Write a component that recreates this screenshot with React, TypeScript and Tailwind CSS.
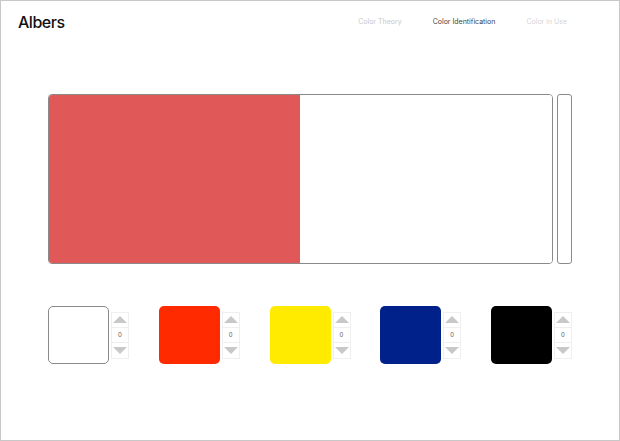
import React from 'react';

const swatches = [
  { id: 'white', color: 'bg-white border border-[#8a8a8a]' },
  { id: 'red', color: 'bg-[#ff2a00]' },
  { id: 'yellow', color: 'bg-[#ffeb00]' },
  { id: 'blue', color: 'bg-[#00218a]' },
  { id: 'black', color: 'bg-black' },
];

const Stepper = () => (
  <div className="flex flex-col w-[18px] h-[47px] border border-[#efefef] bg-white">
    <button className="flex-1 flex items-center justify-center border-b border-[#efefef]">
      <span className="w-0 h-0 border-l-[7px] border-r-[7px] border-b-[7px] border-l-transparent border-r-transparent border-b-[#c8c8c8]" />
    </button>
    <div className="flex-1 flex items-center justify-center text-[6px] leading-none text-[#555]">0</div>
    <button className="flex-1 flex items-center justify-center border-t border-[#efefef]">
      <span className="w-0 h-0 border-l-[7px] border-r-[7px] border-t-[7px] border-l-transparent border-r-transparent border-t-[#c8c8c8]" />
    </button>
  </div>
);

export default function App() {
  return (
    <div
      className="w-[620px] h-[441px] border border-[#c8c8c8] bg-white overflow-hidden"
      style={{ fontFamily: "Inter, 'Noto Sans', sans-serif" }}
    >
      <header className="h-[41px] flex items-center justify-between pl-[17px] pr-[52px]">
        <h1 className="text-[16px] font-medium tracking-[-0.03em] text-[#111] leading-none">Albers</h1>
        <nav className="flex items-center gap-[31px] text-[7px] leading-none">
          <a className="text-[#c8c8c8]">Color Theory</a>
          <a className="text-[#444]">Color Identification</a>
          <a className="text-[#d6d6d6]">Color in Use</a>
        </nav>
      </header>

      <div className="flex gap-[4px] ml-[47px] mt-[52px] w-[524px] h-[170px]">
        <div className="flex-1 flex rounded-[4px] border border-[#8a8a8a] overflow-hidden">
          <div className="w-[251px] bg-[#e05858]" />
          <div className="flex-1 bg-white" />
        </div>
        <div className="w-[15px] rounded-[3px] border border-[#8a8a8a]" />
      </div>

      <div className="flex justify-between ml-[47px] mt-[42px] w-[524px]">
        {swatches.map((s) => (
          <div key={s.id} className="flex items-center gap-[2px]">
            <div className={`w-[61px] h-[58px] rounded-[5px] ${s.color}`} />
            <Stepper />
          </div>
        ))}
      </div>
    </div>
  );
}
